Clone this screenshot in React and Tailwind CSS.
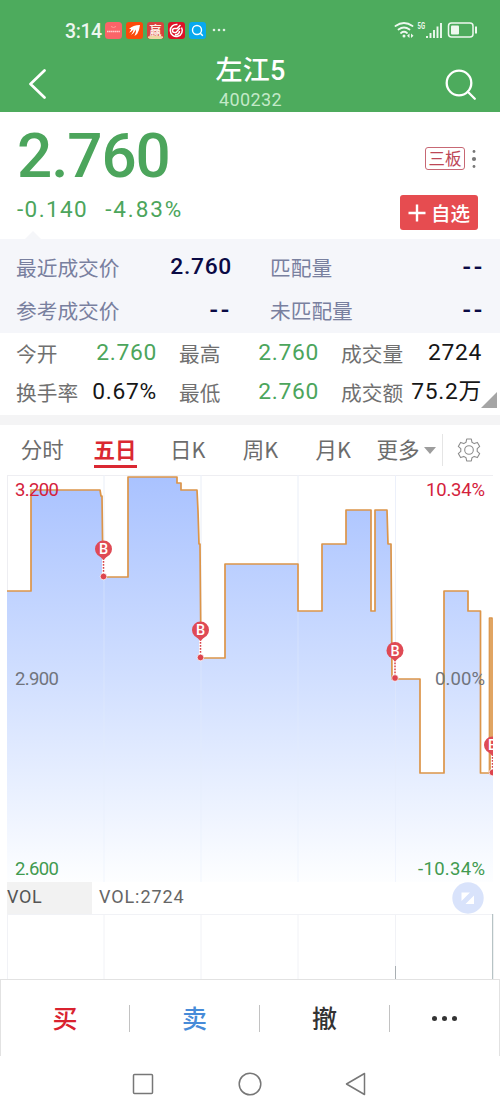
import React from "react";
import { useState } from "react";

const num = "font-['Roboto','Noto_Sans_CJK_SC',sans-serif]";

const tabs = ["分时", "五日", "日K", "周K", "月K"];

const matches = [
  ["最近成交价", "2.760", "匹配量"],
  ["参考成交价", "--", "未匹配量"],
];

// price line, in chart pixels
const line =
  "0,116 24,116 24,15 93,15 94,21 95,21 96,102 121,102 121,2 170,2 170,8 174,8 174,15 190,15 191,36 192,69 193,69 194,183 218,183 218,89 291,89 291,136 315,136 315,69 339,69 339,35 364,35 364,136 368,136 368,35 380,35 381,69 384,69 385,204 413,204 413,298 437,298 437,116 461,116 461,136 473.5,136 473.5,298 482.5,298 482.5,143 485,143 485,298";

const buys = [
  { x: 96.5, y: 74 },
  { x: 193.5, y: 155 },
  { x: 388, y: 175.5 },
  { x: 485.5, y: 270 },
];

const gridX = [97, 194, 291, 388.5];

const StatusBar = () => (
  <div className="flex items-center h-[60px] pl-[65px] pr-[22px] text-white">
    <div className={`${num} text-[19.5px] font-medium w-[40px] mt-[3px] -tracking-[0.4px] opacity-90`}>3:14</div>
    <div className="flex gap-[4px]">
      <svg width="17" height="17" viewBox="0 0 17 17">
        <rect width="17" height="17" rx="3.5" fill="#fb6468" />
        <path d="M6 4.5q2.5 2 5 0" stroke="#ff9b98" fill="none" />
        <path d="M2 9.5h13" stroke="#ffd0ce" strokeWidth="1.6" strokeDasharray="1.5 .4" />
      </svg>
      <svg width="17" height="17" viewBox="0 0 17 17">
        <rect width="17" height="17" rx="3" fill="#fb4a0a" />
        <path d="M3 7q4-4 11-4l-1 5q-1 4-4.5 6 2-4 1.5-6.5-2 4-5 5.5 2.5-3 2.5-5.5-2 2.5-4.5 3 2-1.5 2-3.5z" fill="#fff" />
      </svg>
      <svg width="17" height="17" viewBox="0 0 17 17">
        <rect width="17" height="17" rx="3" fill="#d8423e" />
        <path d="M1 14.500q7.500-2 15 0v1q-1 1.500-3 1.500H4q-2 0-3-1.500z" fill="#efd6a3" />
        <text x="8.500" y="12.500" textAnchor="middle" fontSize="12" fontWeight="700" fill="#fff0e8" fontFamily="Noto Sans CJK SC">赢</text>
      </svg>
      <svg width="17" height="17" viewBox="0 0 17 17">
        <rect width="17" height="17" rx="3" fill="#dd1126" />
        <path d="M13.500 5.500A6 6 0 1 1 9.500 2.600M12.500 3L9 6.500H6.500a2 2 0 0 0 0 4h1.500l4-4.500M11.500 9a3.500 3.500 0 0 1-4.500 3.500" stroke="#fff" strokeWidth="1.500" fill="none" />
      </svg>
      <svg width="17" height="17" viewBox="0 0 17 17">
        <rect width="17" height="17" rx="3" fill="#08a9ef" />
        <circle cx="8" cy="8" r="4.500" stroke="#fff" strokeWidth="1.400" fill="none" />
        <path d="M11.300 11.300l2.500 2.500" stroke="#fff" strokeWidth="1.500" />
      </svg>
    </div>
    <svg className="ml-[6px]" width="14" height="4" viewBox="0 0 14 4" fill="#e0f1e3">
      <circle cx="2" cy="2" r="1.300" />
      <circle cx="7" cy="2" r="1.300" />
      <circle cx="12" cy="2" r="1.300" />
    </svg>
    <svg className="ml-auto" width="84" height="18" viewBox="0 0 84 18" fill="none" stroke="#eef8ef">
      <g strokeWidth="1.800" strokeLinecap="round">
        <path d="M1.500 5Q10 -1 18.500 5" />
        <path d="M4.500 8.500Q10 4.500 15.500 8.500" />
        <path d="M7 12Q10 9.500 13 12" />
      </g>
      <circle cx="10" cy="15" r="1.500" fill="#eef8ef" stroke="none" />
      <path d="M15.500 12.500l-2.500 2.200 2.500 2.200zM17 12.500l2.500 2.200-2.500 2.200z" fill="#eef8ef" stroke="none" />
      <text x="23.500" y="8" fontSize="8.500" fontWeight="700" fill="#eef8ef" stroke="none" textLength="7.500" lengthAdjust="spacingAndGlyphs" fontFamily="Roboto">5G</text>
      <path d="M33 17v-2M36.500 17v-5M40 17V9M43.500 17V5.500M47 17V2" strokeWidth="1.900" />
      <rect x="54.500" y="2" width="24.500" height="14" rx="3" strokeWidth="1.500" />
      <rect x="57" y="4.500" width="8" height="9" rx="1" fill="#eef8ef" stroke="none" />
      <path d="M82 5.500v7" strokeWidth="2" />
    </svg>
  </div>
);

const Header = () => (
  <div className="bg-[#4dab5d] h-[112px]">
    <StatusBar />
    <div className="flex items-center justify-between h-[50px] pl-[28px] pr-[23px] text-white">
      <svg width="20" height="32" viewBox="0 0 20 32" fill="none" stroke="#fff" strokeWidth="2.700" strokeLinecap="round" strokeLinejoin="round">
        <path d="M16.500 1.500L2.500 15L16.500 28.500" />
      </svg>
      <div className="flex flex-col items-center -mt-[3px] ml-[8px]">
        <div className={`${num} text-[27px] leading-[30px] font-medium tracking-[0.3px]`}>左江5</div>
        <div className={`${num} text-[18px] leading-[22px] mt-[3px] tracking-[0.4px] text-[#c3e9c8]`}>400232</div>
      </div>
      <svg width="32" height="32" viewBox="0 0 32 32" fill="none" stroke="#fff" strokeWidth="2.300" strokeLinecap="round">
        <circle cx="14" cy="14" r="12.300" />
        <path d="M22.800 22.800l7 7" />
      </svg>
    </div>
  </div>
);

const Quote = () => (
  <div className="flex justify-between h-[127px] pl-[17px] pr-[20px] bg-white relative">
    <div className={`${num} text-[#4ca55c]`}>
      <div className="text-[62px] leading-[62px] font-medium mt-[13px] -tracking-[1.1px]">2.760</div>
      <div className="flex gap-[17px] mt-[9px] text-[22.500px] leading-[26px]">
        <span className="tracking-[1.400px]">-0.140</span>
        <span className="tracking-[1.900px]">-4.83%</span>
      </div>
    </div>
    <div className="flex flex-col items-end pt-[35px]">
      <div className="flex items-center gap-[6px] mr-[3px]">
        <div className="flex items-center justify-center w-[40px] h-[23px] border border-[#c76874] rounded-[3px] text-[16.500px] leading-none text-[#bd4756]">三板</div>
        <svg width="6" height="20" viewBox="0 0 6 20" fill="#777">
          <circle cx="3" cy="2.500" r="1.400" />
          <circle cx="3" cy="10" r="2.100" />
          <circle cx="3" cy="17.500" r="1.400" />
        </svg>
      </div>
      <button className="flex items-center justify-center gap-[5px] w-[78px] h-[35px] mt-[25px] mr-[2px] rounded-[3px] bg-[#e64c50] text-white text-[19.500px] leading-none font-medium">
        <svg width="18" height="18" viewBox="0 0 18 18" stroke="#fff" strokeWidth="2.400">
          <path d="M9 .5v17M.5 9h17" />
        </svg>
        自选
      </button>
    </div>
    <svg className="absolute left-[25px] bottom-0" width="16" height="8" viewBox="0 0 16 8" fill="#f5f6f9">
      <path d="M0 8L8 0l8 8z" />
    </svg>
  </div>
);

const Matches = () => (
  <div className="flex flex-col h-[94px] bg-[#f5f6fa] pt-[7px] pl-[16px] pr-[15px]">
    {matches.map(([left, value, right]) => (
      <div key={left} className="flex items-center h-[43px] text-[20.700px] leading-none text-[#79809f]">
        <div className="w-[115px]">{left}</div>
        <Value className="w-[101px] text-[#0a0a45] font-medium" value={value} />
        <div className="pl-[38px]">{right}</div>
        <Value className="ml-auto text-[#0a0a45] font-medium" value="--" />
      </div>
    ))}
  </div>
);

const Value = ({ value, className }) => {
  if (value === "--") {
    return <div className={`${num} ${className} text-right text-[25px] tracking-[2.800px]`}>--</div>;
  }
  return <div className={`${num} ${className} text-right text-[22.800px] tracking-[0.700px]`}>{value}</div>;
};

const Stats = () => (
  <div className="relative flex flex-col h-[82px] pt-[1px] pl-[16px] pr-[18px] text-[20.700px] leading-none text-[#707070]">
    <div className="flex items-center h-[39px]">
      <div className="w-[66px]">今开</div>
      <Value className="w-[75px] text-[#4ca55c]" value="2.760" />
      <div className="w-[62px] pl-[22px] whitespace-nowrap">最高</div>
      <Value className="w-[100px] text-[#4ca55c]" value="2.760" />
      <div className="pl-[22px]">成交量</div>
      <Value className="ml-auto text-[#161616]" value="2724" />
    </div>
    <div className="flex items-center h-[39px]">
      <div className="w-[66px]">换手率</div>
      <Value className="w-[75px] text-[#161616]" value="0.67%" />
      <div className="w-[62px] pl-[22px] whitespace-nowrap">最低</div>
      <Value className="w-[100px] text-[#4ca55c]" value="2.760" />
      <div className="pl-[22px]">成交额</div>
      <Value className="ml-auto text-[#161616]" value="75.2万" />
    </div>
    <svg className="absolute right-[3px] bottom-[7px]" width="16" height="16" viewBox="0 0 16 16" fill="#a5a5a5">
      <path d="M16 0v16H0z" />
    </svg>
  </div>
);

const Tabs = ({ active, setActive }) => (
  <div className="flex items-center h-[50px] pl-[6px] pr-[19px] text-[21.500px] text-[#6c6c6c]">
    {tabs.map((tab) => (
      <div key={tab} onClick={() => setActive(tab)} className="w-[72.700px] flex justify-center cursor-pointer">
        <div
          className={
            active === tab
              ? "h-[36px] leading-[34px] border-b-3 border-[#da2832] text-[#da2832] font-bold"
              : "h-[36px] leading-[34px]"
          }
        >
          {tab}
        </div>
      </div>
    ))}
    <div className="flex items-center gap-[5px] pl-[7px] h-[36px] leading-[34px] whitespace-nowrap">
      <span className="-mt-[2px]">更多</span>
      <svg width="12" height="7" viewBox="0 0 12 7" fill="#9d9d9d">
        <path d="M0 0h12L6 7z" />
      </svg>
    </div>
    <div className="w-px h-[32px] bg-[#e5e5e5] ml-[6px]" />
    <svg className="ml-auto" width="24" height="24" viewBox="0 0 24 24" fill="none" stroke="#8c8c8c" strokeWidth="1.100" strokeLinejoin="round">
      <path d="M9.700 1h4.600l.7 3.300 2.200 1.300 3.200-1.200 2.300 4-2.500 2.200v2.800l2.500 2.200-2.300 4-3.200-1.200-2.200 1.300-.7 3.300H9.700L9 19.700l-2.200-1.300-3.200 1.200-2.300-4 2.500-2.200v-2.800L1.300 8.400l2.300-4 3.200 1.200L9 4.300z" />
      <circle cx="12" cy="12" r="4.300" />
    </svg>
  </div>
);

const PriceChart = () => (
  <svg className="block ml-[7px]" width="486" height="407" viewBox="0 0 486 407" fontFamily="Roboto, sans-serif">
    <defs>
      <linearGradient id="area" gradientUnits="userSpaceOnUse" x1="0" y1="0" x2="0" y2="407">
        <stop offset="0" stopColor="#a9c2ff" />
        <stop offset="0.500" stopColor="#d1dfff" />
        <stop offset="1" stopColor="#fdfeff" />
      </linearGradient>
    </defs>
    <path d="M0 .5H486M.5 0V407M0 406.500H486" stroke="#eeeef2" fill="none" />
    {gridX.map((x) => (
      <path key={x} d={`M${x} 0V407`} stroke="#f3f4f9" />
    ))}
    <polygon points={`0,407 ${line} 486,298 486,407`} fill="url(#area)" />
    {gridX.map((x) => (
      <path key={x} d={`M${x} 0V407`} stroke="#e4ebfb" strokeOpacity="0.450" />
    ))}
    <polyline points={line} fill="none" stroke="#dc9549" strokeWidth="1.700" strokeLinejoin="round" />
    <path d="M484 144V298" stroke="#e0a562" strokeWidth="2.500" />
    {buys.map(({ x, y }) => (
      <g key={x}>
        <path d={`M${x} ${y + 9}V${y + 26}`} stroke="#fff" strokeWidth="3" />
        <path d={`M${x} ${y + 9}V${y + 26}`} stroke="#d8454c" strokeWidth="1.500" strokeDasharray="1.700 1.300" />
        <path d={`M${x - 4} ${y + 7}L${x} ${y + 11}L${x + 4} ${y + 7}z`} fill="#df4a55" />
        <circle cx={x} cy={y} r="8.500" fill="#df4a55" />
        <text x={x} y={y + 5} textAnchor="middle" fontSize="14.500" fontWeight="500" fill="#fff">B</text>
        <circle cx={x} cy={y + 27.500} r="3.300" fill="#dd444d" stroke="#fff" strokeWidth="0.700" />
      </g>
    ))}
    <g fontSize="18.500">
      <text x="8" y="21" fill="#d4213c" textLength="44">3.200</text>
      <text x="8" y="209.500" fill="#70747d" textLength="44">2.900</text>
      <text x="8" y="400" fill="#419a50" textLength="44">2.600</text>
      <text x="419" y="21" fill="#d4213c" textLength="59">10.34%</text>
      <text x="428" y="209.500" fill="#70747d" textLength="50">0.00%</text>
      <text x="411" y="400" fill="#419a50" textLength="67">-10.34%</text>
    </g>
  </svg>
);

const Volume = () => (
  <div>
    <div className={`${num} flex items-center h-[32px] pl-[7px] pr-[16px] text-[18px] leading-none text-[#666]`}>
      <div className="flex items-center w-[85px] h-full pb-[2px] bg-[#f2f2f2] tracking-[0.600px] text-[#555]">VOL</div>
      <div className="pl-[7px] pb-[2px] tracking-[0.900px]">VOL:2724</div>
      <svg className="ml-auto" width="32" height="32" viewBox="0 0 32 32">
        <circle cx="16" cy="16" r="15.700" fill="#d9e3fb" />
        <path d="M9.500 10.500H18L9.500 19zM22 13.500V22H13.500z" fill="#fff" />
      </svg>
    </div>
    <svg className="block ml-[7px]" width="487" height="65" viewBox="0 0 487 65">
      <path d="M0 .5H486M.5 0V65M97 0V65M194 0V65M291 0V65M388.500 0V65" stroke="#f1f2f6" />
      <path d="M388.500 52V65" stroke="#a9afb3" />
      <path d="M485.700 0V65" stroke="#a7b5b8" />
    </svg>
  </div>
);

const Actions = () => (
  <div className="grid grid-cols-[129px_130px_130px_1fr] items-center h-[77px] border border-b-0 border-[#e2e2e2] text-[25px] leading-none font-medium">
    <div className="flex items-center h-[27px] border-r border-[#c2c2c2] justify-center text-[#d9222f] pb-[2px]">买</div>
    <div className="flex items-center h-[27px] border-r border-[#c2c2c2] justify-center text-[#478bd8] pb-[2px]">卖</div>
    <div className="flex items-center h-[27px] border-r border-[#c2c2c2] justify-center text-[#333] pb-[2px]">撤</div>
    <div className="flex justify-center gap-[5px]">
      <span className="w-[5px] h-[5px] rounded-full bg-[#333]" />
      <span className="w-[5px] h-[5px] rounded-full bg-[#333]" />
      <span className="w-[5px] h-[5px] rounded-full bg-[#333]" />
    </div>
  </div>
);

const NavBar = () => (
  <div className="flex items-center justify-between h-[55px] pl-[132px] pr-[133px]">
    <svg width="22" height="24" viewBox="0 0 22 24" fill="none" stroke="#777" strokeWidth="1.500">
      <rect x="1.500" y="2.500" width="19" height="19" rx="1" />
    </svg>
    <svg width="24" height="24" viewBox="0 0 24 24" fill="none" stroke="#777" strokeWidth="1.500">
      <circle cx="12" cy="12" r="10.800" />
    </svg>
    <svg width="22" height="24" viewBox="0 0 22 24" fill="none" stroke="#777" strokeWidth="1.500" strokeLinejoin="round">
      <path d="M19.500 1.500v21L1.500 12z" />
    </svg>
  </div>
);

const App = () => {
  const [active, setActive] = useState("五日");

  return (
    <div className="w-[500px] h-[1111px] overflow-hidden bg-white font-['Noto_Sans_CJK_SC',sans-serif]">
      <Header />
      <Quote />
      <Matches />
      <Stats />
      <div className="h-[10px] bg-[#f4f4f5]" />
      <Tabs active={active} setActive={setActive} />
      <PriceChart />
      <Volume />
      <Actions />
      <NavBar />
    </div>
  );
};

export default App;
